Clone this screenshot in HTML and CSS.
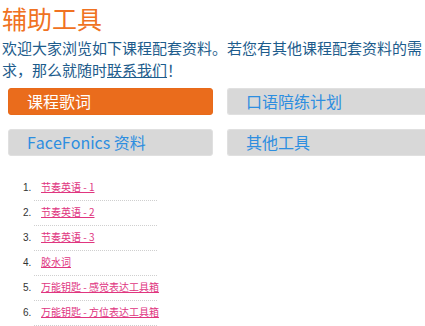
FILE: index.html
```html
<!DOCTYPE html>
<html lang="zh">
<head>
<meta charset="utf-8">
<link rel="stylesheet" href="styles.css">
</head>
<body>
<div class="page">
  <h1 class="title">辅助工具</h1>
  <p class="intro">欢迎大家浏览如下课程配套资料。若您有其他课程配套资料的需求，那么就随时<a href="#" class="contact">联系我们</a>！</p>
  <div class="tabs">
    <a href="#" class="tab active">课程歌词</a>
    <a href="#" class="tab edge">口语陪练计划</a>
    <a href="#" class="tab">FaceFonics 资料</a>
    <a href="#" class="tab edge">其他工具</a>
  </div>
  <ol class="list">
    <li><a href="#">节奏英语 - 1</a></li>
    <li><a href="#">节奏英语 - 2</a></li>
    <li><a href="#">节奏英语 - 3</a></li>
    <li><a href="#">胶水词</a></li>
    <li><a href="#">万能钥匙 - 感觉表达工具箱</a></li>
    <li><a href="#">万能钥匙 - 方位表达工具箱</a></li>
  </ol>
</div>
</body>
</html>
```
FILE: styles.css
```css
html, body {
  margin: 0;
  padding: 0;
  background: #fff;
  overflow: hidden;
}
body {
  font-family: "Microsoft YaHei", "Noto Sans CJK SC", "Noto Sans", sans-serif;
  text-spacing-trim: space-all;
  font-kerning: none;
}
.page {
  padding: 0 0 0 2px;
  width: 423px;
}
.title {
  margin: 0;
  padding-top: 3px;
  font-size: 25px;
  line-height: 30px;
  font-weight: normal;
  color: #f07222;
}
.intro {
  margin: 4px 0 0 0;
  font-family: "Noto Sans CJK SC", sans-serif;
  font-size: 15px;
  line-height: 22px;
  color: #1d5c8c;
  font-feature-settings: "chws" 0, "halt" 0, "palt" 0;
}
.contact {
  color: #1d5c8c;
  text-decoration: underline;
}
.tabs {
  display: grid;
  grid-template-columns: 205px 1fr;
  column-gap: 14px;
  row-gap: 14px;
  margin: 7px 0 0 6px;
}
.tab {
  display: block;
  height: 27px;
  box-sizing: border-box;
  padding-left: 18px;
  font-size: 16px;
  line-height: 25px;
  color: #2d8ee0;
  background: #d8d8d8;
  border: 1px solid #e0e0e0;
  border-radius: 3px;
  text-decoration: none;
}
.tab.edge {
  border-right: none;
  border-radius: 3px 0 0 3px;
}
.tab.active {
  background: #ea6c1c;
  border-color: #e86a1a;
  color: #fff;
}
.list {
  margin: 20px 0 0 0;
  padding: 0 0 0 32px;
  width: 123px;
  font-size: 10px;
  color: #333;
}
.list li {
  height: 25px;
  line-height: 22px;
  border-bottom: 1px dotted #cfcfcf;
  padding-left: 7px;
  box-sizing: border-box;
  white-space: nowrap;
}
.list li::marker {
  font-family: "Liberation Sans", Arial, sans-serif;
  font-size: 10px;
}
.list a {
  color: #e0357f;
  text-decoration: underline;
}
```
